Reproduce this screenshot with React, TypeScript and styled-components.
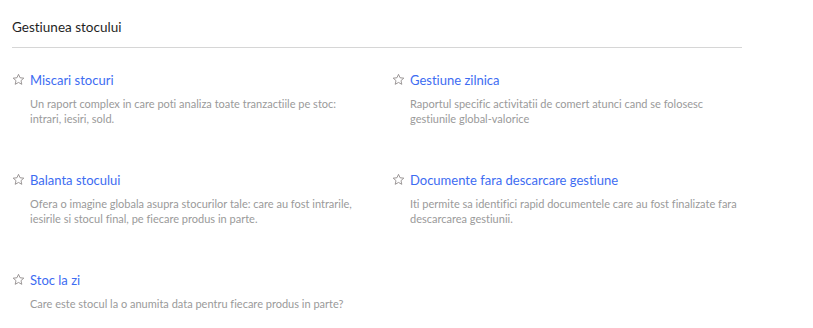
import React from 'react';
import styled, { createGlobalStyle } from 'styled-components';

const reports = [
  {
    title: 'Miscari stocuri',
    text: 'Un raport complex in care poti analiza toate tranzactiile pe stoc: intrari, iesiri, sold.',
  },
  {
    title: 'Gestiune zilnica',
    text: 'Raportul specific activitatii de comert atunci cand se folosesc gestiunile global-valorice',
  },
  {
    title: 'Balanta stocului',
    text: 'Ofera o imagine globala asupra stocurilor tale: care au fost intrarile, iesirile si stocul final, pe fiecare produs in parte.',
  },
  {
    title: 'Documente fara descarcare gestiune',
    text: 'Iti permite sa identifici rapid documentele care au fost finalizate fara descarcarea gestiunii.',
  },
  {
    title: 'Stoc la zi',
    text: 'Care este stocul la o anumita data pentru fiecare produs in parte?',
  },
];

const StarIcon = () => (
  <svg width="13" height="13" viewBox="0 0 24 24" fill="none">
    <polygon
      points="12,2.5 14.9,8.8 21.8,9.5 16.6,14.1 18.1,20.9 12,17.4 5.9,20.9 7.4,14.1 2.2,9.5 9.1,8.8"
      stroke="#8d8888"
      strokeWidth="1.6"
      strokeLinejoin="round"
    />
  </svg>
);

const App = () => {
  return (
    <>
      <GlobalStyle />
      <Page>
        <Header>Gestiunea stocului</Header>
        <Grid>
          {reports.map((r) => (
            <Item key={r.title}>
              <TitleRow>
                <Star>
                  <StarIcon />
                </Star>
                <Link href="#">{r.title}</Link>
              </TitleRow>
              <Description>{r.text}</Description>
            </Item>
          ))}
        </Grid>
      </Page>
    </>
  );
};

export default App;

const GlobalStyle = createGlobalStyle`
  body {
    margin: 0;
    background: #fff;
    font-family: Lato, 'Noto Sans', sans-serif;
    font-variant-ligatures: no-common-ligatures;
  }
`;

const Page = styled.div`
  padding: 0 12px;
  width: 730px;
`;

const Header = styled.div`
  padding: 17px 0 10px;
  font-size: 13.5px;
  line-height: 20px;
  color: #1f1f1f;
  border-bottom: 1px solid #d6d6d6;
`;

const Grid = styled.div`
  display: grid;
  grid-template-columns: 380px 1fr;
  row-gap: 44px;
  padding-top: 22px;
`;

const Item = styled.div`
  display: flex;
  flex-direction: column;
`;

const TitleRow = styled.div`
  display: flex;
  align-items: center;
  height: 20px;
`;

const Star = styled.span`
  display: flex;
  width: 18px;
  margin-top: -2px;
`;

const Link = styled.a`
  font-size: 13px;
  line-height: 20px;
  color: #3d6cf2;
  text-decoration: none;
`;

const Description = styled.p`
  margin: 6px 0 0 18px;
  max-width: 340px;
  font-size: 11px;
  line-height: 15px;
  color: #9a9a9a;
`;
